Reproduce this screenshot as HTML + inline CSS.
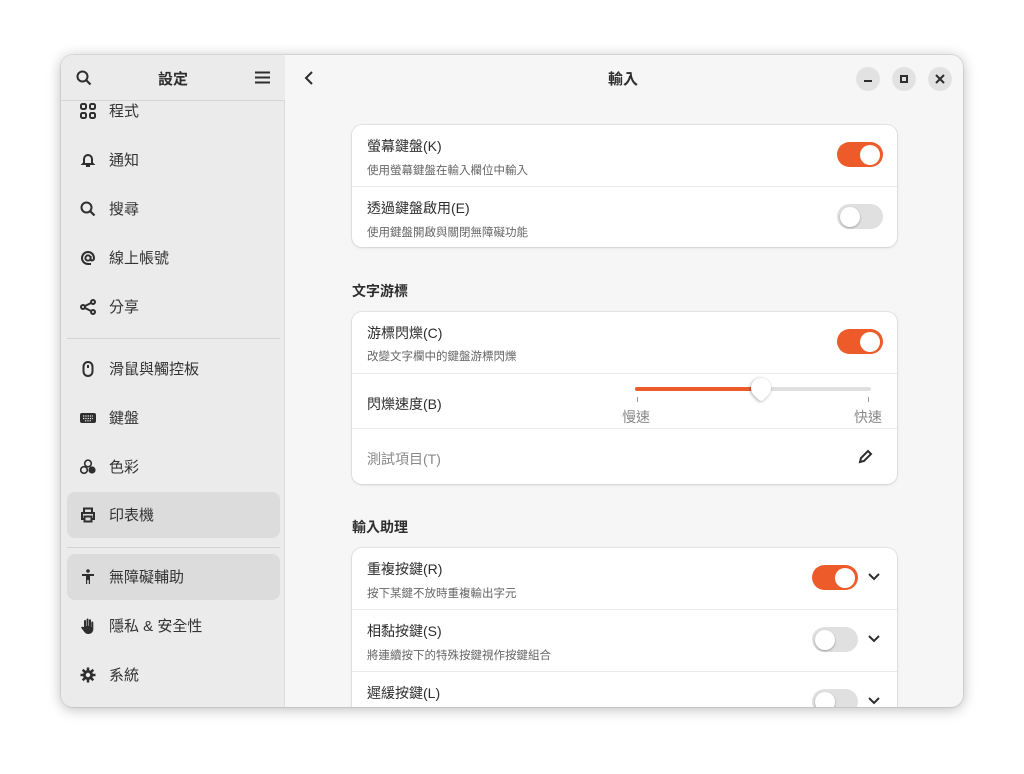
<!DOCTYPE html>
<html><head><meta charset="utf-8"><style>
*{margin:0;padding:0;box-sizing:border-box}
body{width:1024px;height:774px;background:#fff;font-family:"Liberation Sans","Noto Sans CJK TC",sans-serif;position:relative;overflow:hidden;color:#2e2e2e}
.win{position:absolute;left:61px;top:55px;width:902px;height:652px;border-radius:12px;overflow:hidden;background:#f6f6f6;box-shadow:0 2px 14px rgba(0,0,0,.28),0 0 0 1px rgba(0,0,0,.08)}
.side{position:absolute;left:0;top:0;width:224px;height:652px;background:#ebebeb;border-right:1px solid #dcdcdc}
.shead{position:absolute;left:0;top:0;width:224px;height:46px;background:#ebebeb;border-bottom:1px solid #d6d6d6;z-index:2}
.abs{position:absolute}
.it{position:absolute;left:6px;width:213px;height:46px;border-radius:8px}
.it span{position:absolute;left:42px;top:12px;font-size:15px;color:#333}
.it svg{position:absolute;left:13px;top:15px}
.sel{background:#dcdcdc}
.sep{position:absolute;left:6px;width:213px;height:1px;background:#d4d4d4}
.card{position:absolute;left:291px;width:545px;background:#fff;border-radius:10px;box-shadow:0 0 0 1px rgba(0,0,0,.06),0 1px 3px rgba(0,0,0,.1);overflow:hidden}
.t{position:absolute;left:15px;font-size:14px;color:#2e2e2e}
.s{position:absolute;left:15px;font-size:11.5px;color:#666}
.hr{position:absolute;left:0;width:545px;height:1px;background:#ebebeb}
.sw{position:absolute;width:46px;height:25px;border-radius:13px;background:#ed5b2a}
.sw::after{content:"";position:absolute;right:3px;top:2.5px;width:20px;height:20px;border-radius:50%;background:#fff}
.sw.off{background:#e0e0e0}
.sw.off::after{right:auto;left:3px;box-shadow:0 1px 2px rgba(0,0,0,.3)}
.h{position:absolute;left:291px;font-size:14px;font-weight:bold;color:#2e2e2e}
.wb{position:absolute;top:12px;width:24px;height:24px;border-radius:50%;background:#e2e2e2}
</style></head><body>
<div class="win">
 <div class="side">
  <div class="shead">
   <svg class="abs" style="left:15px;top:15px" width="16" height="16" viewBox="0 0 16 16"><circle cx="6.5" cy="6.5" r="5" fill="none" stroke="#2e2e2e" stroke-width="2"/><path d="M10 10l4.5 4.5" stroke="#2e2e2e" stroke-width="2.2"/></svg>
   <div class="abs" style="left:97px;top:13px;font-size:15px;font-weight:bold">設定</div>
   <svg class="abs" style="left:194px;top:16px" width="15" height="13" viewBox="0 0 15 13"><path d="M0 1.5h15M0 6.5h15M0 11.5h15" stroke="#2e2e2e" stroke-width="2"/></svg>
  </div>
  <div class="it" style="top:33px"><svg width="16" height="16" viewBox="0 0 16 16" fill="none" stroke="#2e2e2e" stroke-width="2"><rect x="1" y="1" width="5" height="5" rx="1.5"/><rect x="10" y="1" width="5" height="5" rx="1.5"/><rect x="1" y="10" width="5" height="5" rx="1.5"/><rect x="10" y="10" width="5" height="5" rx="1.5"/></svg><span>程式</span></div>
  <div class="it" style="top:82px"><svg width="16" height="16" viewBox="0 0 16 16"><path d="M4 11V7a4 4 0 018 0v4l1 1H3z" fill="none" stroke="#2e2e2e" stroke-width="2"/><path d="M6 14h4" stroke="#2e2e2e" stroke-width="2"/></svg><span>通知</span></div>
  <div class="it" style="top:131px"><svg width="16" height="16" viewBox="0 0 16 16"><circle cx="6.5" cy="6.5" r="5" fill="none" stroke="#2e2e2e" stroke-width="2"/><path d="M10 10l4.5 4.5" stroke="#2e2e2e" stroke-width="2.2"/></svg><span>搜尋</span></div>
  <div class="it" style="top:180px"><svg width="16" height="16" viewBox="0 0 16 16" fill="none" stroke="#2e2e2e" stroke-width="2"><circle cx="8" cy="8" r="2.6"/><path d="M10.6 6v3.5c0 1.5 3.4 1.5 3.4-1.5A6 6 0 108 14h3"/></svg><span>線上帳號</span></div>
  <div class="it" style="top:229px"><svg width="16" height="16" viewBox="0 0 16 16" fill="none" stroke="#2e2e2e" stroke-width="2"><circle cx="3" cy="8" r="2"/><circle cx="13" cy="3" r="2"/><circle cx="13" cy="13" r="2"/><path d="M5 7l6-3M5 9l6 3"/></svg><span>分享</span></div>
  <div class="sep" style="top:283px"></div>
  <div class="it" style="top:291px"><svg width="16" height="16" viewBox="0 0 16 16" fill="none" stroke="#2e2e2e" stroke-width="2"><rect x="3.5" y="1" width="9" height="14" rx="4.5"/><path d="M8 4v3"/></svg><span>滑鼠與觸控板</span></div>
  <div class="it" style="top:340px"><svg width="16" height="16" viewBox="0 0 16 16"><rect x="0" y="3" width="16" height="10" rx="2" fill="#2e2e2e"/><path d="M3 6h10M3 8.5h10M5 10.8h6" stroke="#ebebeb" stroke-width="1.2" stroke-dasharray="1.3 1"/></svg><span>鍵盤</span></div>
  <div class="it" style="top:389px"><svg width="16" height="16" viewBox="0 0 16 16" fill="#2e2e2e"><circle cx="8" cy="4.5" r="3.3" fill="none" stroke="#2e2e2e" stroke-width="1.6"/><circle cx="4" cy="11" r="3.3" fill="none" stroke="#2e2e2e" stroke-width="1.6"/><circle cx="12" cy="11" r="3.6"/></svg><span>色彩</span></div>
  <div class="it sel" style="top:437px"><svg width="16" height="16" viewBox="0 0 16 16" fill="none" stroke="#2e2e2e" stroke-width="2"><path d="M4 5V1.5h8V5"/><path d="M4 12H2V6h12v6h-2"/><rect x="4.5" y="9.5" width="7" height="5"/></svg><span>印表機</span></div>
  <div class="sep" style="top:492px"></div>
  <div class="it sel" style="top:499px"><svg width="16" height="16" viewBox="0 0 16 16" fill="#2e2e2e"><circle cx="8" cy="2" r="1.8"/><path d="M2 5h12v2H10v8H8.8v-4H7.2v4H6V7H2z"/></svg><span>無障礙輔助</span></div>
  <div class="it" style="top:548px"><svg width="16" height="16" viewBox="0 0 16 16" fill="#2e2e2e"><path d="M4 9V3a1 1 0 012 0v5h.5V1.5a1 1 0 012 0V8H9V2.3a1 1 0 012 0V9h.3V4.5a1 1 0 012 0V11c0 3-2 5-5 5-2 0-3.2-1-4.3-2.5L1.3 10a1 1 0 011.6-1.1z"/></svg><span>隱私 &amp; 安全性</span></div>
  <div class="it" style="top:597px"><svg width="16" height="16" viewBox="0 0 16 16"><g stroke="#2e2e2e" stroke-width="2.5"><path d="M8 0.5v15M0.5 8h15M2.7 2.7l10.6 10.6M13.3 2.7L2.7 13.3"/></g><circle cx="8" cy="8" r="5" fill="#2e2e2e"/><circle cx="8" cy="8" r="2.2" fill="#ebebeb"/></svg><span>系統</span></div>
 </div>
 <svg class="abs" style="left:243px;top:15px" width="10" height="16" viewBox="0 0 10 16"><path d="M8 2L2 8l6 6" fill="none" stroke="#2e2e2e" stroke-width="2"/></svg>
 <div class="abs" style="left:547px;top:13px;font-size:15px;font-weight:bold">輸入</div>
 <div class="wb" style="left:795px"><div class="abs" style="left:8px;top:13px;width:8px;height:2px;background:#2e2e2e"></div></div>
 <div class="wb" style="left:831px"><div class="abs" style="left:8px;top:8px;width:8px;height:8px;border:2px solid #2e2e2e"></div></div>
 <div class="wb" style="left:867px"><svg class="abs" style="left:7px;top:7px" width="10" height="10"><path d="M1 1l8 8M9 1l-8 8" stroke="#2e2e2e" stroke-width="2"/></svg></div>

 <div class="card" style="top:70px;height:122px">
  <div class="t" style="top:11px">螢幕鍵盤(K)</div><div class="s" style="top:37px">使用螢幕鍵盤在輸入欄位中輸入</div>
  <div class="sw" style="left:485px;top:17px"></div>
  <div class="hr" style="top:61px"></div>
  <div class="t" style="top:73px">透過鍵盤啟用(E)</div><div class="s" style="top:99px">使用鍵盤開啟與關閉無障礙功能</div>
  <div class="sw off" style="left:485px;top:79px"></div>
 </div>
 <div class="h" style="top:226px">文字游標</div>
 <div class="card" style="top:257px;height:172px">
  <div class="t" style="top:11px">游標閃爍(C)</div><div class="s" style="top:36px">改變文字欄中的鍵盤游標閃爍</div>
  <div class="sw" style="left:485px;top:17px"></div>
  <div class="hr" style="top:61px"></div>
  <div class="t" style="top:82px">閃爍速度(B)</div>
  <div class="abs" style="left:283px;top:75px;width:236px;height:4px;border-radius:2px;background:#e0e0e0"></div>
  <div class="abs" style="left:283px;top:75px;width:127px;height:4px;border-radius:2px;background:#ed5b2a"></div>
  <div class="abs" style="left:399px;top:66px;width:20px;height:20px;border-radius:50% 50% 3px 50%;transform:rotate(45deg);background:#fff;box-shadow:0 1px 3px rgba(0,0,0,.35)"></div>
  <div class="abs" style="left:285px;top:85px;width:1px;height:5px;background:#999"></div>
  <div class="abs" style="left:516px;top:85px;width:1px;height:5px;background:#999"></div>
  <div class="abs" style="left:270px;top:95px;font-size:14px;color:#888">慢速</div>
  <div class="abs" style="left:502px;top:95px;font-size:14px;color:#888">快速</div>
  <div class="hr" style="top:116px"></div>
  <div class="t" style="top:137px;color:#888">測試項目(T)</div>
  <svg class="abs" style="left:506px;top:137px" width="15" height="15" viewBox="0 0 15 15"><path d="M2 13l1-4 7-7 3 3-7 7z" fill="none" stroke="#2e2e2e" stroke-width="2"/></svg>
 </div>
 <div class="h" style="top:462px">輸入助理</div>
 <div class="card" style="top:493px;height:200px">
  <div class="t" style="top:11px">重複按鍵(R)</div><div class="s" style="top:37px">按下某鍵不放時重複輸出字元</div>
  <div class="sw" style="left:460px;top:17px"></div>
  <svg class="abs" style="left:516px;top:25px" width="12" height="8"><path d="M1 1l5 5 5-5" fill="none" stroke="#2e2e2e" stroke-width="2"/></svg>
  <div class="hr" style="top:61px"></div>
  <div class="t" style="top:73px">相黏按鍵(S)</div><div class="s" style="top:99px">將連續按下的特殊按鍵視作按鍵組合</div>
  <div class="sw off" style="left:460px;top:79px"></div>
  <svg class="abs" style="left:516px;top:87px" width="12" height="8"><path d="M1 1l5 5 5-5" fill="none" stroke="#2e2e2e" stroke-width="2"/></svg>
  <div class="hr" style="top:123px"></div>
  <div class="t" style="top:135px">遲緩按鍵(L)</div>
  <div class="sw off" style="left:460px;top:141px"></div>
  <svg class="abs" style="left:516px;top:149px" width="12" height="8"><path d="M1 1l5 5 5-5" fill="none" stroke="#2e2e2e" stroke-width="2"/></svg>
 </div>
</div>
</body></html>
